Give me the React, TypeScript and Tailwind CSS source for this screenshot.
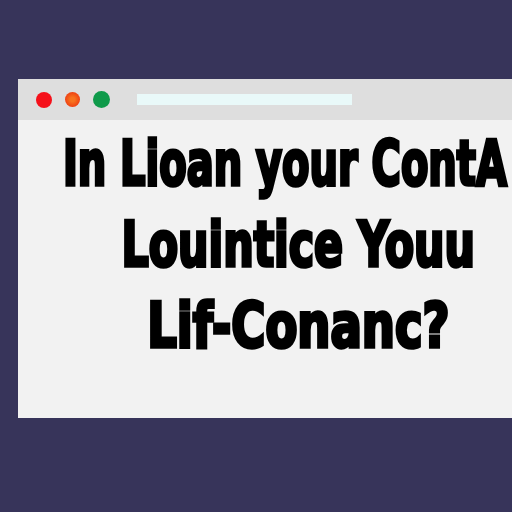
export default function App() {
  return (
    <div className="w-[512px] h-[512px] overflow-hidden bg-[#37345a] pt-[79px] pl-[18px]">
      <div className="w-[544px] h-[339px] bg-[#f2f2f2] flex flex-col">
        {/* title bar */}
        <div className="h-[41px] bg-[#dedede] flex items-center pl-[18px] shrink-0">
          <div className="flex items-center gap-[13px]">
            <span className="w-4 h-4 rounded-full bg-[#f5101a]" />
            <span className="w-[15px] h-[15px] rounded-full bg-[radial-gradient(circle,#f7731f_20%,#ee3d12_75%)]" />
            <span className="w-[17px] h-[17px] rounded-full bg-[#0f9a4a]" />
          </div>
          <div className="ml-[27px] w-[215px] h-[11px] bg-[#e9f9f9]" />
        </div>

        {/* page text */}
        <div
          className="pt-[3px] pl-[16px] flex flex-col items-center text-black font-bold text-[63px] leading-[81px] [-webkit-text-stroke:3.5px_black]"
          style={{ fontFamily: '"DejaVu Sans Condensed", "DejaVu Sans", sans-serif' }}
        >
          <div className="mr-[26px] whitespace-nowrap scale-x-[0.705]">In Lioan your ContA</div>
          <div className="whitespace-nowrap scale-x-[0.755]">Louintice Youu</div>
          <div className="whitespace-nowrap scale-x-[0.82]">Lif-Conanc?</div>
        </div>
      </div>
    </div>
  );
}
